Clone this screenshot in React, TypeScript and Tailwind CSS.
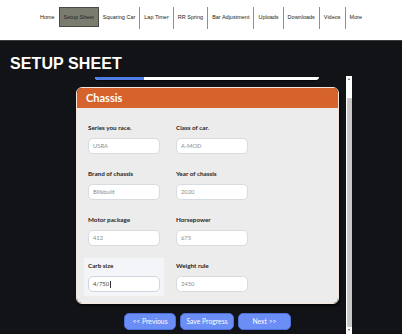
import { Fragment } from 'react'

// ─────────────────────────────────────────────────────────────
// Data
// ─────────────────────────────────────────────────────────────

const NAV_ITEMS = [
  'Home',
  'Setup Sheet',
  'Squaring Car',
  'Lap Timer',
  'RR Spring',
  'Bar Adjustment',
  'Uploads',
  'Downloads',
  'Videos',
  'More',
]

const ACTIVE_NAV = 'Setup Sheet'

const FIELDS = [
  { label: 'Series you race.', value: 'USRA' },
  { label: 'Class of car.', value: 'A-MOD' },
  { label: 'Brand of chassis', value: 'Billsbuilt' },
  { label: 'Year of chassis', value: '2020' },
  { label: 'Motor package', value: '412' },
  { label: 'Horsepower', value: '675' },
  { label: 'Carb size', value: '4/750', focused: true },
  { label: 'Weight rule', value: '2450' },
]

// ─────────────────────────────────────────────────────────────
// Top navigation
// ─────────────────────────────────────────────────────────────

function TopNav() {
  return (
    <nav className="h-[41px] shrink-0 bg-white border-b border-[#3d3d3d] flex justify-center items-start pt-[7px] font-['Liberation_Sans',Arial,sans-serif] text-[5.5px] text-[#222]">
      {NAV_ITEMS.map((item, i) => {
        const active = item === ACTIVE_NAV
        const prevActive = i > 0 && NAV_ITEMS[i - 1] === ACTIVE_NAV
        const showSep = i > 0 && !active && !prevActive
        return (
          <Fragment key={item}>
            {showSep && <div className="w-px h-[22px] bg-[#8f8f8f]" />}
            <div
              className={
                active
                  ? 'h-[20px] px-[4px] flex items-center bg-[#7b7c70] border border-[#4a4a44] text-[#1e1e1e]'
                  : 'h-[20px] px-[4px] flex items-center'
              }
            >
              {item}
            </div>
          </Fragment>
        )
      })}
    </nav>
  )
}

// ─────────────────────────────────────────────────────────────
// Form pieces
// ─────────────────────────────────────────────────────────────

function Field({ label, value, focused }: { label: string; value: string; focused?: boolean }) {
  return (
    <div className={focused ? 'pt-[3px] px-[4px] pb-[4px] bg-[#f3f5f8]' : 'pt-[3px] px-[4px] pb-[4px]'}>
      <div className="h-[10px] leading-[10px] text-[6.3px] font-bold text-[#262626]">{label}</div>
      <div
        className={
          focused
            ? 'mt-[5px] h-[16px] w-[72px] rounded-[5px] bg-white border border-[#cfd4de] flex items-center pl-[4px] text-[5.8px] text-[#444]'
            : 'mt-[5px] h-[16px] w-[72px] rounded-[5px] bg-white border border-[#d8dbe0] flex items-center pl-[4px] text-[5.8px] text-[#8c8c8c]'
        }
      >
        {value}
        {focused && <span className="ml-[0.5px] w-px h-[7px] bg-[#333]" />}
      </div>
    </div>
  )
}

function NavButton({ label, width }: { label: string; width: string }) {
  return (
    <button
      className={`${width} h-[17px] rounded-[5px] bg-[#6a8df6] border border-[#4d6fd8] text-white text-[6.8px] flex items-center justify-center`}
    >
      {label}
    </button>
  )
}

function Scrollbar() {
  return (
    <div className="ml-[1px] w-[6px] h-full bg-white flex flex-col items-center">
      <div className="mt-[2px] w-0 h-0 border-l-[1.5px] border-r-[1.5px] border-b-[2px] border-l-transparent border-r-transparent border-b-[#555]" />
      <div className="mt-[18px] w-[5px] h-[229px] bg-[#c8c8c8] rounded-[1px]" />
      <div className="mt-[2px] w-0 h-0 border-l-[1.5px] border-r-[1.5px] border-t-[2px] border-l-transparent border-r-transparent border-t-[#555]" />
    </div>
  )
}

// ─────────────────────────────────────────────────────────────
// App
// ─────────────────────────────────────────────────────────────

export default function App() {
  return (
    <div className="w-[402px] h-[334px] overflow-hidden bg-[#121316] flex flex-col">
      <TopNav />

      <h1 className="pt-[14px] pl-[10px] h-[35px] text-[16px] leading-[18px] font-bold text-white font-['Liberation_Sans',Arial,sans-serif] tracking-[0.1px]">
        SETUP SHEET
      </h1>

      <div className="flex-1 flex pl-[75px] min-h-0">
        <div className="w-[270px] font-['Lato','Open_Sans',sans-serif]">
          {/* progress bar (scrolled mostly out of view) */}
          <div className="mt-[1px] ml-[20px] w-[224px] h-[3px] bg-white rounded-b-[3px] overflow-hidden shadow-[0_1px_1px_rgba(0,0,0,0.6)]">
            <div className="w-[49px] h-full bg-[#4f7ee8]" />
          </div>

          {/* Chassis card */}
          <div className="mt-[7px] ml-[1px] w-[263px] rounded-[6px] border border-[#f4e6dc] overflow-hidden shadow-[1px_2px_2px_rgba(0,0,0,0.7)]">
            <div className="h-[20px] bg-[#d5632b] flex items-center pl-[9px] text-[11px] font-bold text-white">
              Chassis
            </div>
            <div className="bg-[#ebeceb] pt-[12px] pl-[7px] pb-[7px] grid grid-cols-[80px_80px] gap-x-[8px] gap-y-[8px]">
              {FIELDS.map((f) => (
                <Field key={f.label} {...f} />
              ))}
            </div>
          </div>

          <div className="mt-[9px] ml-[1px] w-[263px] flex justify-center gap-[4px]">
            <NavButton label="<< Previous" width="w-[52px]" />
            <NavButton label="Save Progress" width="w-[54px]" />
            <NavButton label="Next >>" width="w-[53px]" />
          </div>
        </div>

        <Scrollbar />
      </div>
    </div>
  )
}
